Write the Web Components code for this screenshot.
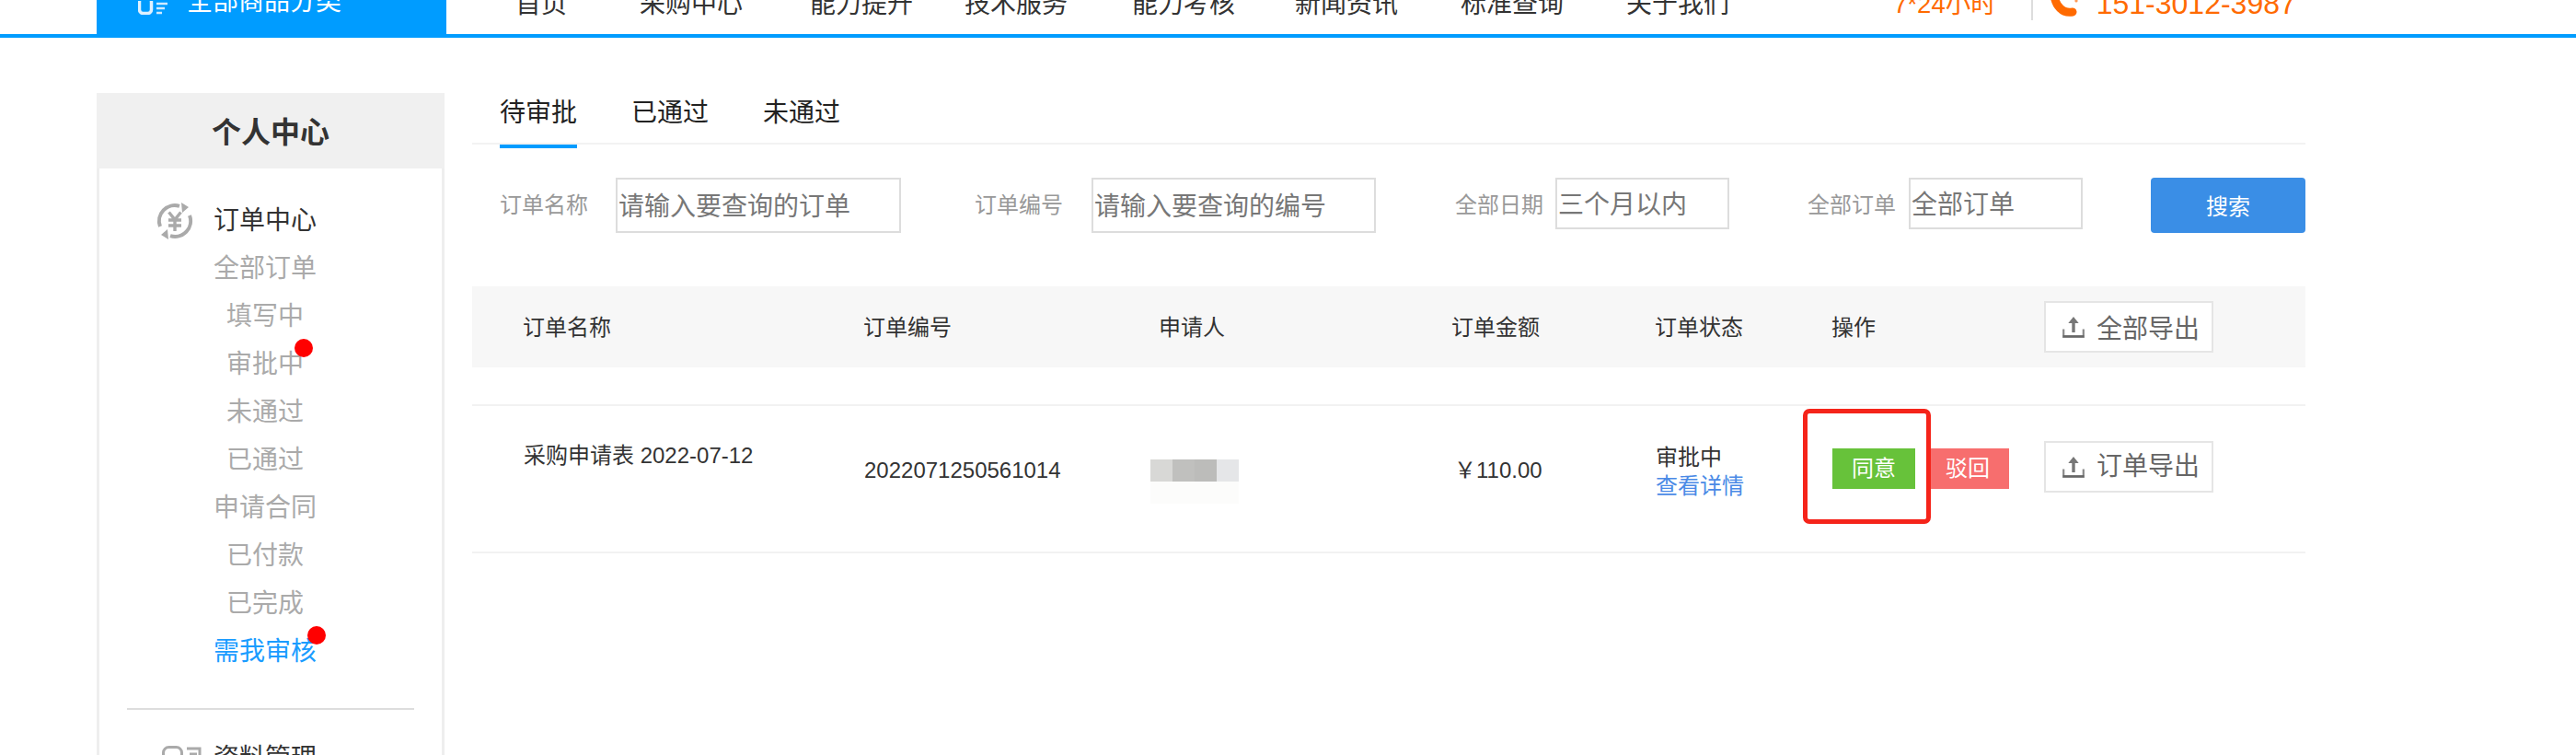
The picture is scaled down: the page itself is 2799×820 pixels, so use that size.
<!DOCTYPE html>
<html lang="zh-CN">
<head>
<meta charset="utf-8">
<title>个人中心</title>
<style>
html,body{margin:0;padding:0;background:#fff}
body{width:2799px;height:820px;overflow:hidden;font-family:"Liberation Sans","Noto Sans CJK SC",sans-serif;color:#333}
</style>
</head>
<body>
<site-header></site-header>
<page-body>
  <user-sidebar></user-sidebar>
  <order-panel></order-panel>
</page-body>

<script>
function def(name, html, setup){
  customElements.define(name, class extends HTMLElement{
    constructor(){super();const t=document.createElement('template');t.innerHTML=html;this.attachShadow({mode:'open'}).appendChild(t.content.cloneNode(true));}
    connectedCallback(){ if(setup) setup(this); }
  });
}

const uploadIcon = `<svg width="24" height="24" viewBox="0 0 24 24" aria-hidden="true"><path d="M12 1 6.300 8h4V18h3.400V8h4z" fill="#777"/><path d="M1.200 14.500V23h21.600v-8.500" fill="none" stroke="#8a8a8a" stroke-width="2.200"/><path d="M0.500 22.200h23" stroke="#666" stroke-width="2.200"/></svg>`;

def('site-header', `
<style>
:host{display:block;height:41px;box-sizing:border-box;border-bottom:4px solid #009cff;overflow:hidden}
.in{display:flex;align-items:flex-end;height:37px;box-sizing:border-box;padding:0 0 18px 105px}
.cat{flex:none;width:380px;height:37px;margin-bottom:-18px;background:#009cff;color:#fff;display:flex;align-items:flex-end;box-sizing:border-box;padding:0 0 21px 45px;font-size:28px;line-height:28px;white-space:nowrap}
.cat svg{flex:none;margin:0 20px 0 0}
nav{display:flex;font-size:28px;line-height:28px;white-space:nowrap;color:#333}
nav span:nth-child(1){margin-left:75px}
nav span:nth-child(2){margin-left:79px}
nav span:nth-child(3){margin-left:73px}
nav span:nth-child(4){margin-left:56px}
nav span:nth-child(5){margin-left:70px}
nav span:nth-child(6){margin-left:65px}
nav span:nth-child(7){margin-left:68px}
nav span:nth-child(8){margin-left:68px}
.r{display:flex;align-items:flex-end;color:#ff6a00;margin-left:178px;white-space:nowrap}
.h{font-size:27.500px;line-height:28px}
.d{width:2px;height:22px;background:#ddd;margin:0 18px -3px 38px}
.r svg{flex:none;margin:0 19px -1px 0}
.p{font-size:32px;line-height:32px;margin-bottom:-1px}
</style>
<div class="in">
  <div class="cat"><svg width="33" height="15" viewBox="0 0 33 15"><rect x="1.500" y="-3" width="13" height="16.500" rx="4" fill="none" stroke="#dff1ff" stroke-width="3.500"/><path d="M20 3h12M20 8h9M20 13h6" stroke="#cfeaff" stroke-width="2.400"/></svg>全部商品分类</div>
  <nav><span>首页</span><span>采购中心</span><span>能力提升</span><span>技术服务</span><span>能力考核</span><span>新闻资讯</span><span>标准查询</span><span>关于我们</span></nav>
  <div class="r">
    <span class="h">7*24小时</span><i class="d"></i>
    <svg width="32" height="20" viewBox="0 0 32 20"><path d="M5 -6C6 6 14 15 25 13" fill="none" stroke="#ff6a00" stroke-width="9" stroke-linecap="round"/><circle cx="29" cy="1" r="1.600" fill="#ff9a55"/></svg>
    <span class="p">151-3012-3987</span>
  </div>
</div>`);

def('page-body', `
<style>:host{display:flex;align-items:flex-start;gap:30px;padding:60px 0 0 105px}</style><slot></slot>`);

def('menu-item', `
<style>
:host{display:block;height:52px;line-height:52px;text-align:center;font-size:28px;color:#aaa;white-space:nowrap}
:host([active]){color:#1a9cff}
:host([title-item]){color:#333}
.t{position:relative;display:inline-block}
.dot{display:none;position:absolute;top:-2px;right:-10px;width:20px;height:20px;border-radius:50%;background:#f00}
:host([dot]) .dot{display:block}
</style>
<span class="t"><slot></slot><i class="dot"></i></span>`);

def('menu-section', `
<style>
:host{display:grid;grid-template-columns:61px 112px;padding-left:63px}
.ic{height:52px;display:flex;align-items:center;margin-left:-1px}
</style>
<div class="ic"><slot name="icon"></slot></div>
<div><slot></slot></div>`);

def('user-sidebar', `
<style>
:host{display:block;flex:none;width:378px;height:760px;box-sizing:border-box;border:solid #eee;border-width:0 3px}
h2{margin:0 -3px;height:82px;line-height:87px;background:#f0f0f0;text-align:center;font-size:32px;font-weight:700;color:#333}
.s1{padding-top:31px}
hr{border:0;height:2px;background:#ddd;margin:35px 30px 27px;width:312px}
</style>
<h2>个人中心</h2>
<div class="s1">
<menu-section>
  <svg slot="icon" width="40" height="40" viewBox="0 0 40 40" fill="none" stroke="#aaa">
    <path d="M25 3.800A17 17 0 0 0 4 26" stroke-width="4"/>
    <path d="M15 36.200A17 17 0 0 0 36 14" stroke-width="4"/>
    <path d="M27 0l8 5-7 6zM13 40l-8-5 7-6z" fill="#aaa" stroke="none"/>
    <path d="M13.500 10.500l6.500 8 6.500-8M20 18v13M13 19h14M13 25h14" stroke-width="3.400"/>
  </svg>
  <menu-item title-item>订单中心</menu-item>
  <menu-item>全部订单</menu-item>
  <menu-item>填写中</menu-item>
  <menu-item dot>审批中</menu-item>
  <menu-item>未通过</menu-item>
  <menu-item>已通过</menu-item>
  <menu-item>申请合同</menu-item>
  <menu-item>已付款</menu-item>
  <menu-item>已完成</menu-item>
  <menu-item active dot>需我审核</menu-item>
</menu-section>
</div>
<hr>
<menu-section>
  <svg slot="icon" width="47" height="28" viewBox="0 0 47 28" style="margin-left:6px" fill="none" stroke="#aaa" stroke-width="3"><rect x="1.500" y="1.500" width="20" height="24" rx="6"/><path d="M27 3h14v22H27M30 9h8M30 15h8"/></svg>
  <menu-item title-item>资料管理</menu-item>
</menu-section>`);

def('order-tabs', `
<style>
:host{display:flex;gap:59px;height:56px;box-sizing:border-box;padding-left:30px;border-bottom:2px solid #f2f2f2;font-size:28px;line-height:43px;color:#222}
span{position:relative;white-space:nowrap}
.on::after{content:"";position:absolute;left:0;right:0;top:56px;height:4px;background:#009cff}
</style>
<span class="on">待审批</span><span>已通过</span><span>未通过</span>`);

def('filter-field', `
<style>
:host{display:flex;align-items:flex-start;flex:none;white-space:nowrap}
.l{height:60px;line-height:60px;font-size:24px;color:#999}
.b{box-sizing:border-box;border:2px solid #ddd;padding:0 0 2px 1px;display:flex;align-items:center;font-size:28px;color:#777;overflow:hidden}
</style>
<span class="l"><slot name="label"></slot></span><div class="b"><slot></slot></div>`, el=>{
  const b=el.shadowRoot.querySelector('.b');
  b.style.width=el.getAttribute('w')+'px';b.style.height=el.getAttribute('h')+'px';b.style.marginLeft=el.getAttribute('g')+'px';
  el.style.marginLeft=(el.getAttribute('m')||0)+'px';
});

def('order-filter', `
<style>
:host{display:flex;align-items:flex-start;margin-top:36px;padding-left:30px}
button{flex:none;margin:0 0 0 74px;padding:0 0 2px;border:0;width:168px;height:60px;border-radius:4px;background:#3a8ee6;color:#fff;font:inherit;font-size:24px}
</style>
<slot></slot><button>搜索</button>`);

def('export-button', `
<style>
:host{display:flex;align-items:center;box-sizing:border-box;width:184px;height:56px;padding-left:18px;gap:13px;background:#fff;border:2px solid #e5e5e5;font-size:28px;color:#666;white-space:nowrap}
svg{flex:none}
</style>${uploadIcon}<slot></slot>`);

def('action-button', `
<style>
:host{display:block;width:90px;height:44px;line-height:44px;text-align:center;font-size:24px;color:#fff;background:#67c23a}
:host([danger]){background:#f76e6e}
</style><slot></slot>`);

def('blur-mosaic', `
<style>
:host{display:grid;grid-template-columns:repeat(4,24px);grid-auto-rows:24px;margin:58px 0 0 -9px}
i:nth-of-type(1){background:#d8d8d6}i:nth-of-type(2){background:#c0c0be}i:nth-of-type(3){background:#bcbcba}i:nth-of-type(4){background:#e5e6e8}
i:nth-of-type(n+5){background:#fcfcfb}
</style><i></i><i></i><i></i><i></i><i></i><i></i><i></i><i></i>`);

def('order-table', `
<style>
:host{display:block;margin-top:58px;font-size:24px;color:#333}
.g{display:grid;grid-template-columns:370px 321px 318px 221px 192px 230px 285px;padding-left:55px;white-space:nowrap}
.head{height:88px;background:#f7f7f7;align-items:center}
.head span{margin-top:-4px}
.head export-button{margin-left:1px}
.row{position:relative;height:158px;margin-top:40px;border:solid #f2f2f2;border-width:2px 0;box-sizing:content-box;line-height:28px}
.c1{padding:40px 0 0 1px}
.c2,.c4{padding-top:56px}
.c2{padding-left:1px}
.c4{padding-left:3px}
.c5{padding:40px 0 0 1px;line-height:31px}
.c5 a{display:block;color:#4a8ae6;text-decoration:none}
.c6{padding:46px 0 0 1px;display:flex;gap:12px}
.c7{padding:38px 0 0 1px}
.mark{position:absolute;left:1446px;top:3px;width:139px;height:125px;box-sizing:border-box;border:5px solid #f5241a;border-radius:7px}
</style>
<div class="g head"><span>订单名称</span><span>订单编号</span><span>申请人</span><span>订单金额</span><span>订单状态</span><span>操作</span><export-button>全部导出</export-button></div>
<div class="g row">
  <div class="c1">采购申请表 2022-07-12</div>
  <div class="c2">2022071250561014</div>
  <div><blur-mosaic></blur-mosaic></div>
  <div class="c4">￥110.00</div>
  <div class="c5">审批中<a href="#">查看详情</a></div>
  <div class="c6"><action-button>同意</action-button><action-button danger>驳回</action-button></div>
  <div class="c7"><export-button>订单导出</export-button></div>
  <div class="mark"></div>
</div>`);

def('order-panel', `
<style>:host{display:block;flex:none;width:1992px}</style>
<order-tabs></order-tabs>
<order-filter>
  <filter-field w="310" h="60" g="30"><span slot="label">订单名称</span>请输入要查询的订单</filter-field>
  <filter-field w="309" h="60" g="31" m="80"><span slot="label">订单编号</span>请输入要查询的编号</filter-field>
  <filter-field w="189" h="56" g="13" m="86"><span slot="label">全部日期</span>三个月以内</filter-field>
  <filter-field w="189" h="56" g="14" m="85"><span slot="label">全部订单</span>全部订单</filter-field>
</order-filter>
<order-table></order-table>`);
</script>
</body>
</html>
